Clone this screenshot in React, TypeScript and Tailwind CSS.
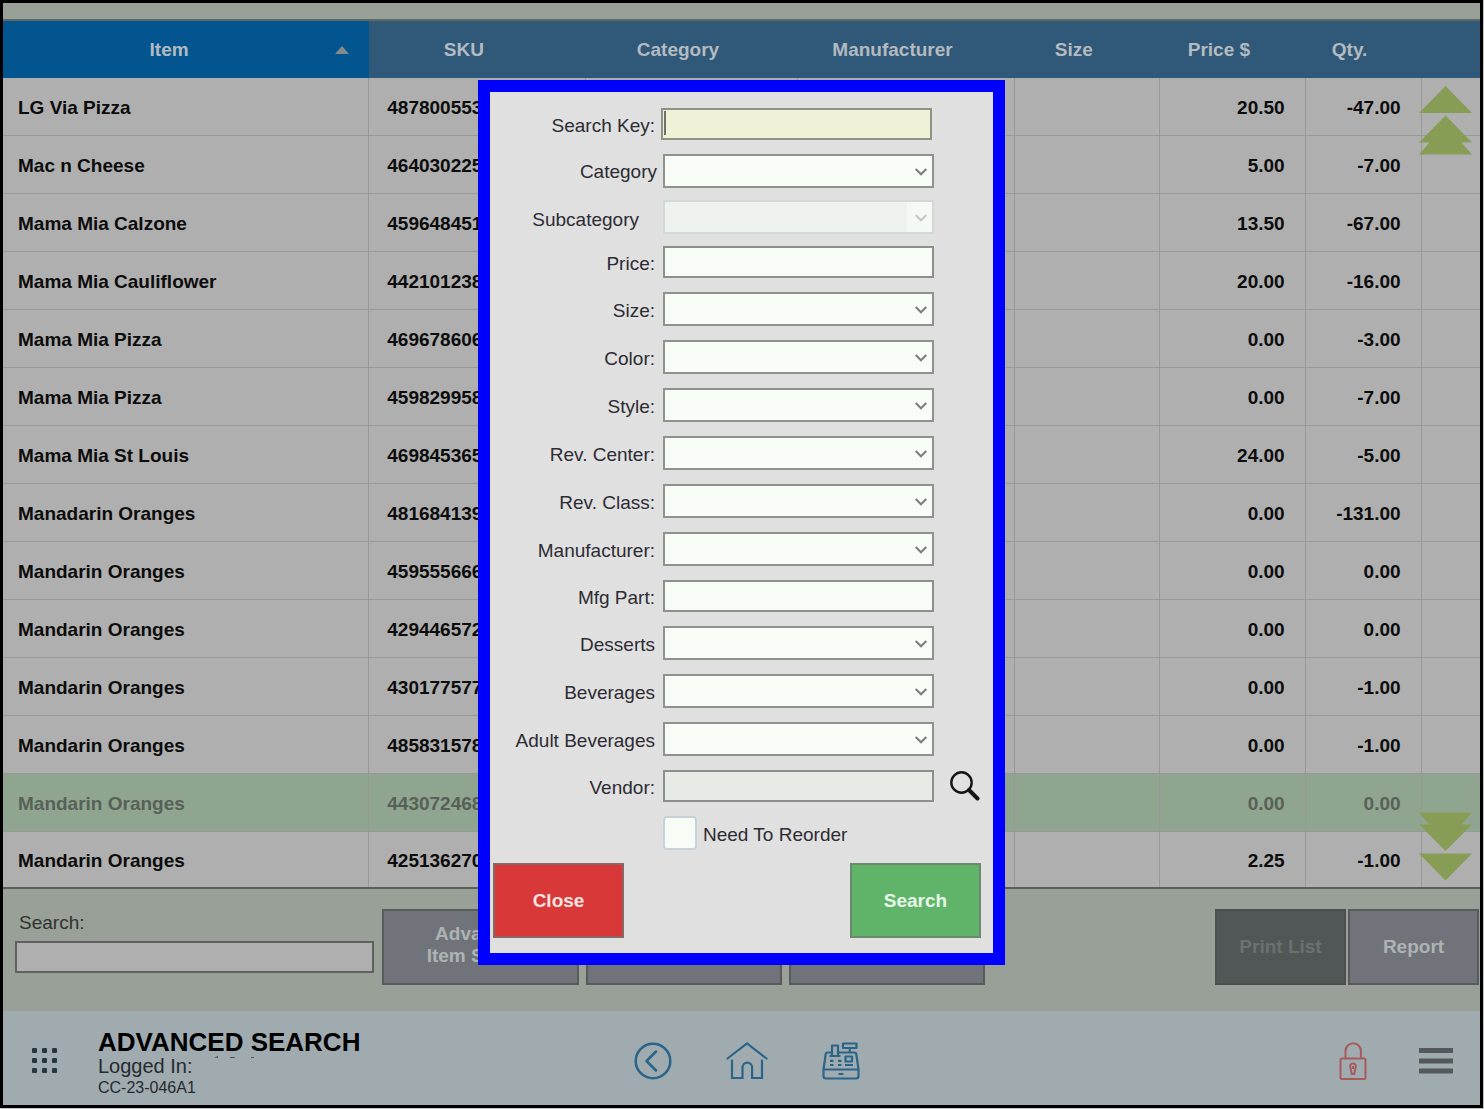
import { ReactNode } from "react";

type Item = { name: string; sku: string; price: string; qty: string; selected?: boolean };

const items: Item[] = [
  { name: "LG Via Pizza", sku: "487800553", price: "20.50", qty: "-47.00" },
  { name: "Mac n Cheese", sku: "464030225", price: "5.00", qty: "-7.00" },
  { name: "Mama Mia Calzone", sku: "459648451", price: "13.50", qty: "-67.00" },
  { name: "Mama Mia Cauliflower", sku: "442101238", price: "20.00", qty: "-16.00" },
  { name: "Mama Mia Pizza", sku: "469678606", price: "0.00", qty: "-3.00" },
  { name: "Mama Mia Pizza", sku: "459829958", price: "0.00", qty: "-7.00" },
  { name: "Mama Mia St Louis", sku: "469845365", price: "24.00", qty: "-5.00" },
  { name: "Manadarin Oranges", sku: "481684139", price: "0.00", qty: "-131.00" },
  { name: "Mandarin Oranges", sku: "459555666", price: "0.00", qty: "0.00" },
  { name: "Mandarin Oranges", sku: "429446572", price: "0.00", qty: "0.00" },
  { name: "Mandarin Oranges", sku: "430177577", price: "0.00", qty: "-1.00" },
  { name: "Mandarin Oranges", sku: "485831578", price: "0.00", qty: "-1.00" },
  { name: "Mandarin Oranges", sku: "443072468", price: "0.00", qty: "0.00", selected: true },
  { name: "Mandarin Oranges", sku: "425136270", price: "2.25", qty: "-1.00" },
];

const columns = [
  { label: "SKU", width: "w-[14.7%]" },
  { label: "Category", width: "w-[14.3%]" },
  { label: "Manufacturer", width: "w-[14.75%]" },
  { label: "Size", width: "w-[9.8%]" },
  { label: "Price $", width: "w-[9.85%]" },
  { label: "Qty.", width: "w-[7.85%]" },
];

const cell = "border-r border-[#959a94] p-0 pt-0.5";

function ItemTable() {
  return (
    <div className="relative border-b-2 border-[#5b5e5b]">
      <table className="w-full table-fixed border-separate border-spacing-0 bg-[#afafaf] font-bold">
        <thead>
          <tr className="h-[57px] bg-[#305878] text-[#b3bac0]">
            <th className="w-[24.8%] bg-[#02558f] p-0">
              <button className="flex w-full items-center pr-5 font-bold">
                <span className="flex-1">Item</span>
                <svg width="14" height="8" viewBox="0 0 14 8" fill="#858b8d">
                  <path d="M7 0 14 8H0Z" />
                </svg>
              </button>
            </th>
            {columns.map((col) => (
              <th key={col.label} className={`${col.width} p-0 pr-7`}>
                {col.label}
              </th>
            ))}
            <th className="p-0" aria-label="Scroll" />
          </tr>
        </thead>
        <tbody className="text-[#0c0c0c] [&_td]:border-b [&_td]:border-[#959a94] [&_tr:last-child_td]:border-b-0">
          {items.map((item, i) => (
            <tr key={i} className={`h-[58px] last:h-[55px] ${item.selected ? "bg-[#8fa58f] text-[#586158]" : ""}`}>
              <td className={`${cell} pl-[15px]`}>{item.name}</td>
              <td className={`${cell} pl-[18px]`}>{item.sku}</td>
              <td className={cell} />
              <td className={cell} />
              <td className={cell} />
              <td className={`${cell} pr-5 text-right`}>{item.price}</td>
              <td className={`${cell} pr-5 text-right`}>{item.qty}</td>
              <td className="p-0" />
            </tr>
          ))}
        </tbody>
      </table>

      <button aria-label="Scroll up" className="absolute top-[65px] right-2">
        <svg width="53" height="69" viewBox="0 0 53 69" fill="#879d56">
          <path d="M26.500 0 53 27H0Z" />
          <path d="M26.500 29.500 53 56.500H42.500L53 68.500H0L10.500 56.500H0Z" />
        </svg>
      </button>
      <button aria-label="Scroll down" className="absolute right-2 bottom-1.5">
        <svg width="53" height="69" viewBox="0 0 53 69" fill="#879d56">
          <path d="M0 .5H53L42.500 12.500H53L26.500 39 0 12.500H10.500Z" />
          <path d="M0 41.500H53L26.500 68.500Z" />
        </svg>
      </button>
    </div>
  );
}

const barButton = "h-[76px] border-2 border-[#585b5b] bg-[#707379] font-bold leading-[22px] text-[#adb3b3]";

function ActionBar() {
  return (
    <div className="flex items-start bg-[#99a097] pt-5 pr-px pb-[26px] pl-3">
      <div className="mr-2 w-[359px]">
        <label htmlFor="search" className="mb-1 block pl-1 leading-7 text-[#303330]">
          Search:
        </label>
        <input id="search" className="block h-8 w-full border-2 border-[#5e615e] bg-[#afafaf] px-1 outline-none" />
      </div>
      <div className="flex gap-[7px]">
        <button className={`${barButton} w-[197px] pb-1`}>
          Advanced
          <br />
          Item Search
        </button>
        <button className={`${barButton} w-[196px]`} aria-label="Options" />
        <button className={`${barButton} w-[196px]`} aria-label="More options" />
      </div>
      <div className="ml-auto flex gap-0.5">
        <button disabled className="h-[76px] w-[131px] border-2 border-[#4a504f] bg-[#505756] font-bold text-[#6b7170]">
          Print List
        </button>
        <button className={`${barButton} w-[131px]`}>Report</button>
      </div>
    </div>
  );
}

function Footer() {
  return (
    <footer className="grid flex-1 grid-cols-[1fr_auto_1fr] items-center bg-[#a0abb0] pt-1.5 pr-[27px] pl-[29px]">
      <div className="flex items-center">
        <button aria-label="Apps">
          <svg width="26" height="26" viewBox="0 0 26 26" fill="#27373f">
            {[0, 10, 20].map((y) => [0, 10, 20].map((x) => <rect key={`${x}-${y}`} x={x} y={y} width="5" height="5" rx="1" />))}
          </svg>
        </button>
        <div className="ml-10 pt-1.5 text-[#252a2d]">
          <h1 className="text-[26px] leading-7 font-bold text-black">ADVANCED SEARCH</h1>
          <p className="flex text-[20px] leading-5">
            Logged In:
            <svg className="ml-5" width="44" height="4" viewBox="0 0 44 4" fill="#4c555a">
              <path d="M1 1.500 5 0V2ZM17 1h5v1h-5ZM38 1h3v1h-3Z" />
            </svg>
          </p>
          <p className="text-[16px] leading-6">CC-23-046A1</p>
        </div>
      </div>

      <nav className="flex items-center gap-[54px] pl-2 text-[#2a6489]">
        <button aria-label="Back">
          <svg width="38" height="38" viewBox="0 0 38 38" fill="none" stroke="currentColor" strokeWidth="2.500">
            <circle cx="19" cy="19" r="17.300" />
            <path d="M22 9.500 12.500 19 22 28.500" strokeLinecap="round" strokeLinejoin="round" />
          </svg>
        </button>
        <button aria-label="Home">
          <svg width="42" height="38" viewBox="0 0 42 38" fill="none" stroke="currentColor" strokeWidth="2.200" strokeLinecap="round">
            <path d="M1.500 16.500 21 1.500 40.500 16.500" />
            <path d="M6 18.500V36H16.500V25.500a4.800 4.800 0 0 1 9.600 0V36H36V18.500" />
          </svg>
        </button>
        <button aria-label="Register">
          <svg width="38" height="38" viewBox="0 0 38 38" fill="none" stroke="currentColor" strokeWidth="2.200" strokeLinejoin="round">
            <path d="M9.500 10.500H5.500Q4 10.500 3.700 12L1.500 27.500V34Q1.500 36.500 4 36.500H34Q36.500 36.500 36.500 34V27.500L34.300 12Q34 10.500 32.500 10.500H16.500M1.500 27.500H36.500" />
            <path d="M10 14V3.500h6V14ZM7.500 14H18.500" />
            <path d="M21 1.500H34.500V6H21ZM27.800 6v4.500M23.500 14.500h6.500v5h-6.500Z" />
            <path d="M8 18.800h3.500M16 18.800h3.500M8 23h3.500M16 23h3.500M23 23h8M16.500 32h5" />
          </svg>
        </button>
      </nav>

      <div className="flex items-center justify-end gap-[52px]">
        <button aria-label="Lock">
          <svg width="28" height="38" viewBox="0 0 28 38" fill="none" stroke="#a75a5c" strokeWidth="2">
            <rect x="1.500" y="16.500" width="25" height="20.500" rx="1.500" />
            <path d="M6.500 16.500V9a7.700 7.700 0 0 1 15.400 0v7.500" />
            <path d="M14 21.500a2.800 2.800 0 0 1 2.500 4.200L15.300 32h-2.600l-1.200-6.300A2.800 2.800 0 0 1 14 21.500ZM14 24v3" />
          </svg>
        </button>
        <button aria-label="Menu">
          <svg width="34" height="26" viewBox="0 0 34 26" fill="#53585b">
            <path d="M0 0H34V5H0ZM0 10.500H34V15.500H0ZM0 20.500H34V25.500H0Z" />
          </svg>
        </button>
      </div>
    </footer>
  );
}

function Field({ id, label, labelClass = "pt-1", children }: { id: string; label: string; labelClass?: string; children: ReactNode }) {
  return (
    <div className="grid grid-cols-[165px_271px] items-center gap-x-2">
      <label htmlFor={id} className={`text-right leading-6 whitespace-nowrap ${labelClass}`}>
        {label}
      </label>
      {children}
    </div>
  );
}

function TextField({ id, label }: { id: string; label: string }) {
  return (
    <Field id={id} label={label}>
      <input id={id} className="h-8 w-full border-2 border-[#8c908d] bg-[#f7fcf7] px-1 outline-none" />
    </Field>
  );
}

function SelectField({ id, label, disabled, labelClass }: { id: string; label: string; disabled?: boolean; labelClass?: string }) {
  return (
    <Field id={id} label={label} labelClass={labelClass}>
      <div className="relative">
        <select
          id={id}
          disabled={disabled}
          className="block h-[34px] w-full appearance-none border-2 border-[#8f9390] bg-[#f7fcf7] px-1 outline-none disabled:border-[#d4d7d4] disabled:bg-[#edf2ee] disabled:opacity-100"
        />
        {disabled && <span className="absolute inset-y-0.5 right-0.5 w-[25px] bg-[#f5f9f5]" />}
        <svg
          className="pointer-events-none absolute top-3.5 right-[7px]"
          width="12"
          height="8"
          viewBox="0 0 12 8"
          fill="none"
          stroke={disabled ? "#c3c7c4" : "#7b7f7c"}
          strokeWidth="2"
        >
          <path d="M.7 1 6 6.300 11.300 1" />
        </svg>
      </div>
    </Field>
  );
}

function SearchDialog() {
  return (
    <div className="absolute inset-0 flex items-start justify-center pt-[77px]">
      <form role="dialog" aria-label="Advanced search" className="w-[527px] border-12 border-[#0000ff] bg-[#e0e0e0] pt-4 pb-[15px] text-[#2d2b33]">
        <div className="flex flex-col gap-3.5">
          <Field id="key" label="Search Key:">
            <div className="relative -ml-0.5">
              <input id="key" className="block h-8 w-[271px] border-2 border-[#8d9186] bg-[#eff2d7] px-1 outline-none" />
              <span className="absolute top-[3px] left-[3px] h-6 w-0.5 bg-[#6e706a]" />
            </div>
          </Field>
          <div className="flex flex-col gap-3">
            <SelectField id="category" label="Category" labelClass="-mr-0.5 pt-0.5" />
            <SelectField id="subcategory" label="Subcategory" labelClass="pt-1.5 pr-4" disabled />
            <TextField id="price" label="Price:" />
          </div>
          <SelectField id="size" label="Size:" />
          <SelectField id="color" label="Color:" />
          <SelectField id="style" label="Style:" />
          <SelectField id="rev-center" label="Rev. Center:" />
          <SelectField id="rev-class" label="Rev. Class:" />
          <SelectField id="manufacturer" label="Manufacturer:" />
          <TextField id="mfg-part" label="Mfg Part:" />
          <SelectField id="desserts" label="Desserts" />
          <SelectField id="beverages" label="Beverages" />
          <SelectField id="adult-beverages" label="Adult Beverages" />
          <div className="flex h-8 items-center gap-4">
            <Field id="vendor" label="Vendor:">
              <input id="vendor" readOnly className="h-8 w-full border-2 border-[#8c908d] bg-[#e6ebe6] px-1 outline-none" />
            </Field>
            <button type="button" aria-label="Find vendor">
              <svg width="30" height="30" viewBox="0 0 30 30" fill="none" stroke="#161616">
                <circle cx="11.500" cy="11.500" r="10.200" strokeWidth="2.400" />
                <path d="M19 19 27.500 27.500" strokeWidth="4" strokeLinecap="round" />
              </svg>
            </button>
          </div>
          <div className="flex items-center gap-1.5 pl-[173px]">
            <input
              id="reorder"
              type="checkbox"
              className="size-[34px] appearance-none rounded-sm border-2 border-[#c9d2d8] bg-[#f7fcf7]"
            />
            <label htmlFor="reorder" className="pt-1 leading-6">
              Need To Reorder
            </label>
          </div>
        </div>
        <div className="mt-[13px] flex justify-between pr-3 pl-[3px] font-bold">
          <button type="button" className="h-[75px] w-[131px] border-2 border-[#8a6664] bg-[#d93838] text-[#f6e4e2]">
            Close
          </button>
          <button type="button" className="h-[75px] w-[131px] border-2 border-[#6b8a6d] bg-[#60b46a] text-[#e6f6e8]">
            Search
          </button>
        </div>
      </form>
    </div>
  );
}

export default function App() {
  return (
    <div className="flex min-h-screen bg-[#c4c6c4] pr-px pb-px font-['Liberation_Sans',Arial,sans-serif] text-[19px] leading-6">
      <div className="relative flex w-full flex-col border-3 border-black">
        <div className="h-[18px] border-b-2 border-[#5f6864] bg-[#99a097]" />
        <ItemTable />
        <ActionBar />
        <Footer />
        <SearchDialog />
      </div>
    </div>
  );
}
